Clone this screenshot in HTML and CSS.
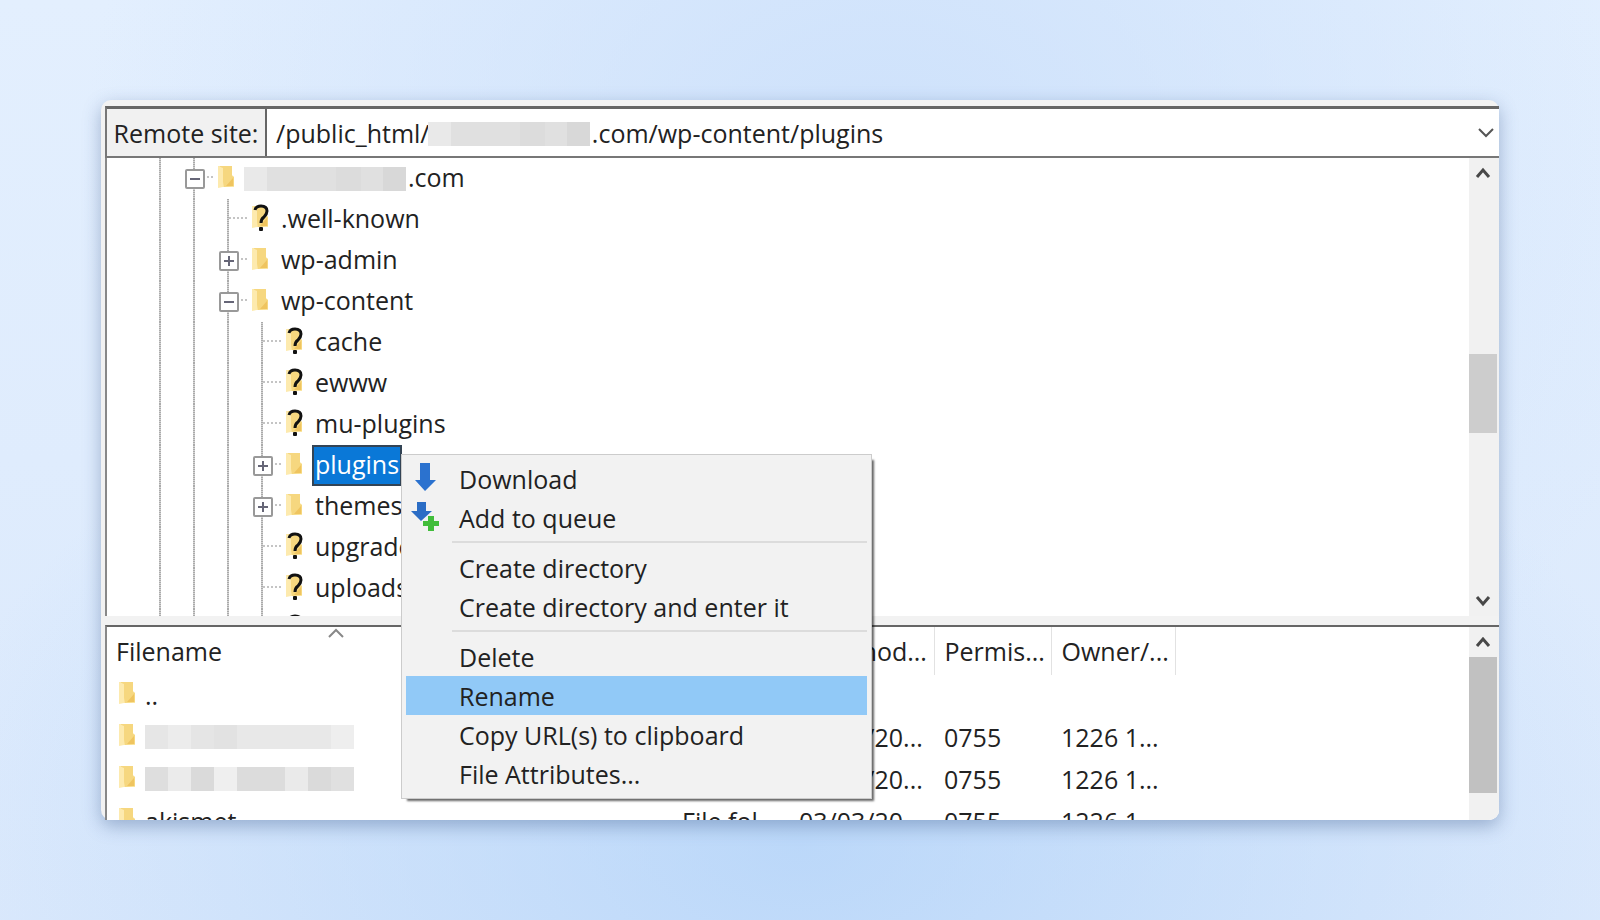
FILE: index.html
```html
<!DOCTYPE html>
<html lang="en">
<head>
  <meta charset="utf-8">
  <title>Remote site</title>
  <link rel="stylesheet" href="styles.css">
</head>
<body>
  <svg class="defs" aria-hidden="true">
    <symbol id="folder" viewBox="0 0 20 26">
      <path d="M2 2h14v9l2 2v10H2z" fill="#fbe7a4"/>
      <path d="M4 2h12v10l2 1v9l-10 1z" fill="#f6d77f"/>
      <path d="M2 2l5 2v19l-5 1z" fill="#fdeaae"/>
      <path d="M10 22l7-8v8z" fill="#efc45f"/>
    </symbol>
    <symbol id="unknown" viewBox="0 0 20 28">
      <use href="#folder" width="20" height="26"/>
      <path d="M5 6q1-4 6-4 6 0 6 5 0 3-3 6-3 2-3 6" fill="none" stroke="#111" stroke-width="3"/>
      <rect x="9" y="23" width="4" height="4" rx="1" fill="#111"/>
    </symbol>
    <symbol id="up" viewBox="0 0 16 12">
      <path d="M2 10l6-7 6 7" fill="none" stroke="#484848" stroke-width="3"/>
    </symbol>
    <symbol id="down" viewBox="0 0 16 12">
      <path d="M2 2l6 7 6-7" fill="none" stroke="#484848" stroke-width="3"/>
    </symbol>
  </svg>

  <main class="window">
    <div class="path-bar">
      <label for="remotePath">Remote site:</label>
      <div class="path">
        <select id="remotePath">
          <option>/public_html/&nbsp;&nbsp;&nbsp;&nbsp;&nbsp;&nbsp;&nbsp;&nbsp;&nbsp;&nbsp;&nbsp;&nbsp;&nbsp;&nbsp;&nbsp;&nbsp;&nbsp;&nbsp;&nbsp;&nbsp;&nbsp;&nbsp;&nbsp;&nbsp;&nbsp;.com/wp-content/plugins</option>
        </select>
        <span class="mask path-mask"></span>
        <svg class="path-arrow" viewBox="0 0 16 10"><path d="M1 1l7 7 7-7" fill="none" stroke="#555" stroke-width="2"/></svg>
      </div>
    </div>

    <section class="pane tree-pane">
      <ul class="tree">
        <li><i></i><i class="minus"></i><svg><use href="#folder"/></svg><span><b class="mask"></b>.com</span></li>
        <li><i></i><i></i><i class="leaf"></i><svg><use href="#unknown"/></svg><span>.well-known</span></li>
        <li><i></i><i></i><i class="plus"></i><svg><use href="#folder"/></svg><span>wp-admin</span></li>
        <li><i></i><i></i><i class="minus"></i><svg><use href="#folder"/></svg><span>wp-content</span></li>
        <li><i></i><i></i><i></i><i class="leaf"></i><svg><use href="#unknown"/></svg><span>cache</span></li>
        <li><i></i><i></i><i></i><i class="leaf"></i><svg><use href="#unknown"/></svg><span>ewww</span></li>
        <li><i></i><i></i><i></i><i class="leaf"></i><svg><use href="#unknown"/></svg><span>mu-plugins</span></li>
        <li><i></i><i></i><i></i><i class="plus"></i><svg><use href="#folder"/></svg><span class="selected">plugins</span></li>
        <li><i></i><i></i><i></i><i class="plus"></i><svg><use href="#folder"/></svg><span>themes</span></li>
        <li><i></i><i></i><i></i><i class="leaf"></i><svg><use href="#unknown"/></svg><span>upgrade</span></li>
        <li><i></i><i></i><i></i><i class="leaf"></i><svg><use href="#unknown"/></svg><span>uploads</span></li>
        <li><i></i><i></i><i></i><i class="leaf"></i><svg><use href="#unknown"/></svg></li>
      </ul>
      <div class="scrollbar">
        <button aria-label="Scroll up"><svg><use href="#up"/></svg></button>
        <div class="track"><div class="thumb tree-thumb"></div></div>
        <button aria-label="Scroll down"><svg><use href="#down"/></svg></button>
      </div>
    </section>

    <section class="pane list-pane">
      <div class="list">
        <table>
          <colgroup>
            <col class="col-name"><col class="col-size"><col class="col-type"><col class="col-date"><col class="col-perm"><col class="col-owner"><col>
          </colgroup>
          <thead>
            <tr>
              <th>Filename<svg class="sort" viewBox="0 0 16 10"><path d="M1 9l7-7 7 7" fill="none" stroke="#888" stroke-width="2"/></svg></th>
              <th>Filesize</th>
              <th>Filetype</th>
              <th>Last mod...</th>
              <th>Permis...</th>
              <th>Owner/...</th>
              <th></th>
            </tr>
          </thead>
          <tbody>
            <tr><td><div class="file"><svg><use href="#folder"/></svg>..</div></td><td></td><td></td><td></td><td></td><td></td><td></td></tr>
            <tr><td><div class="file"><svg><use href="#folder"/></svg><b class="mask file-mask"></b></div></td><td></td><td></td><td>03/03/20...</td><td>0755</td><td>1226 1...</td><td></td></tr>
            <tr><td><div class="file"><svg><use href="#folder"/></svg><b class="mask file-mask dark"></b></div></td><td></td><td></td><td>03/03/20...</td><td>0755</td><td>1226 1...</td><td></td></tr>
            <tr><td><div class="file"><svg><use href="#folder"/></svg>akismet</div></td><td></td><td>File fol...</td><td>03/03/20...</td><td>0755</td><td>1226 1...</td><td></td></tr>
          </tbody>
        </table>
      </div>
      <div class="scrollbar">
        <button aria-label="Scroll up"><svg><use href="#up"/></svg></button>
        <div class="track"><div class="thumb list-thumb"></div></div>
      </div>
    </section>

    <div class="menu">
      <button>
        <svg viewBox="0 0 28 32"><path d="M9 2h10v17h6L14 30 4 19h5z" fill="#2b72cf"/></svg>
        Download
      </button>
      <button>
        <svg viewBox="0 0 28 32">
          <path d="M6 2h9v9h6L10 21 0 11h6z" fill="#2b6dc5"/>
          <path d="M17 16h6v5h5v5h-5v5h-6v-5h-5v-5h5z" fill="#41bd3b"/>
        </svg>
        Add to queue
      </button>
      <hr>
      <button>Create directory</button>
      <button>Create directory and enter it</button>
      <hr>
      <button>Delete</button>
      <button class="active">Rename</button>
      <button>Copy URL(s) to clipboard</button>
      <button>File Attributes...</button>
    </div>
  </main>
</body>
</html>
```
FILE: styles.css
```css
* {
  box-sizing: border-box;
}
body {
  margin: 0;
  height: 100vh;
  padding: 100px 101px;
  background:
    radial-gradient(ellipse 55% 60% at 50% 92%, rgba(184, 214, 249, 0.9), rgba(184, 214, 249, 0)),
    radial-gradient(ellipse 50% 80% at 55% 20%, #cde1fb, rgba(205, 225, 251, 0)),
    linear-gradient(#e3effe, #dbe9fc);
  font-family: "Open Sans", "Noto Sans", sans-serif;
  font-size: 25px;
  color: #222;
}
button, select {
  font: inherit;
  color: inherit;
  border: none;
  background: none;
  padding: 0;
}
.defs {
  position: absolute;
  width: 0;
  height: 0;
}
.window {
  position: relative;
  display: flex;
  flex-direction: column;
  height: 100%;
  padding: 6px 0 0 4px;
  border-radius: 10px;
  background: #f2f2f2;
  box-shadow: 0 6px 18px rgba(60, 90, 140, 0.4);
}

/* path bar */
.path-bar {
  display: flex;
  height: 52px;
  border: 2px solid #777;
  border-top: 3px solid #666;
  border-right: none;
}
.path-bar label {
  display: flex;
  align-items: center;
  justify-content: center;
  width: 160px;
  background: #f1f1f1;
  border-right: 2px solid #666;
}
.path {
  position: relative;
  flex: 1;
  background: white;
}
.path select {
  width: 100%;
  height: 100%;
  padding-left: 9px;
  appearance: none;
}
.path-arrow {
  position: absolute;
  right: 5px;
  top: 19px;
  width: 16px;
  height: 10px;
}

/* blurred out names */
.mask {
  display: inline-block;
  width: 162px;
  height: 24px;
  background: linear-gradient(90deg, #e9e9e9 14%, #e0e0e0 14%, #e0e0e0 57%, #dcdcdc 57%, #dcdcdc 72%, #e0e0e0 72%, #e0e0e0 86%, #d8d8d8 86%);
}
.path-mask {
  position: absolute;
  left: 161px;
  top: 13px;
}

/* panes */
.pane {
  display: flex;
  overflow: hidden;
  border-left: 2px solid #888;
  background: white;
}
.tree-pane {
  flex: 0 0 458px;
}
.list-pane {
  flex: 1;
  margin-top: 9px;
  border-top: 2px solid #666;
  border-radius: 0 0 10px 0;
}

/* directory tree */
.tree {
  flex: 1;
  margin: 0;
  padding: 0 0 0 36px;
  list-style: none;
}
.tree li {
  display: flex;
  align-items: center;
  height: 41px;
}
.tree svg {
  width: 20px;
  height: 28px;
  margin: 0 8px 4px 5px;
}
.tree span {
  height: 41px;
  line-height: 39px;
  padding: 0 3px;
}
.tree .mask {
  margin: -3px 2px 0 -3px;
  vertical-align: middle;
}
.tree .selected {
  color: white;
  background: #0a78d7;
  outline: 2px solid #345;
  outline-offset: -2px;
}
.tree i {
  position: relative;
  width: 34px;
  height: 41px;
  background: repeating-linear-gradient(#aaa 0 1px, #d4d4d4 1px 2px) 16px 0 / 2px 100% no-repeat;
}
.leaf::after, .plus::after, .minus::after {
  content: "";
  position: absolute;
  left: 18px;
  top: 18px;
  width: 18px;
  border-top: 2px dotted #c4c4c4;
}
.plus::before, .minus::before {
  content: "";
  position: absolute;
  z-index: 1;
  left: 8px;
  top: 11px;
  width: 16px;
  height: 16px;
  border: 2px solid #999;
  border-radius: 2px;
  background: linear-gradient(#667, #667) center / 10px 2px no-repeat, white;
}
.plus::before {
  background: linear-gradient(#667, #667) center / 10px 2px no-repeat, linear-gradient(#667, #667) center / 2px 10px no-repeat, white;
}

/* scrollbars */
.scrollbar {
  display: flex;
  flex-direction: column;
  width: 30px;
  padding-right: 2px;
  background: #f1f1f1;
}
.scrollbar button {
  height: 30px;
}
.scrollbar svg {
  display: block;
  width: 16px;
  height: 12px;
  margin: 0 auto;
}
.track {
  flex: 1;
}
.thumb {
  background: #cdcdcd;
}
.tree-thumb {
  height: 79px;
  margin-top: 166px;
}
.list-thumb {
  height: 136px;
  background: #c1c1c1;
}

/* file list */
.list {
  flex: 1;
  overflow: hidden;
}
table {
  width: 100%;
  table-layout: fixed;
  border-collapse: collapse;
}
.col-name { width: 458px; }
.col-size { width: 107px; }
.col-type { width: 117px; }
.col-date { width: 145px; }
.col-perm { width: 117px; }
.col-owner { width: 124px; }
th, td {
  height: 42px;
  padding: 0 0 2px 10px;
  text-align: left;
  font-weight: normal;
  white-space: nowrap;
}
th {
  position: relative;
  height: 48px;
  padding-bottom: 0;
  border-right: 1px solid #e2e2e2;
}
th:first-child {
  padding-left: 9px;
}
th:last-child {
  border: none;
}
.sort {
  position: absolute;
  left: 221px;
  top: 1px;
  width: 16px;
  height: 10px;
}
.file {
  display: flex;
  align-items: center;
}
.file svg {
  width: 20px;
  height: 26px;
  margin: 0 8px 4px 0;
}
.file-mask {
  width: 209px;
  background: linear-gradient(90deg, #e6e6e6 11%, #ececec 11%, #ececec 22%, #e5e5e5 22%, #e5e5e5 33%, #e2e2e2 33%, #e2e2e2 44%, #e8e8e8 44%, #e8e8e8 89%, #eee 89%);
}
.dark {
  background: linear-gradient(90deg, #dedede 11%, #ebebeb 11%, #ebebeb 22%, #dadada 22%, #dadada 33%, #efefef 33%, #efefef 44%, #dcdcdc 44%, #dcdcdc 67%, #eaeaea 67%, #eaeaea 78%, #dadada 78%, #dadada 89%, #e0e0e0 89%);
}

/* context menu */
.menu {
  position: absolute;
  left: 300px;
  top: 354px;
  width: 471px;
  padding: 4px 4px 5px;
  border: 1px solid #ccc;
  background: #f2f2f2;
  box-shadow: 4px 4px 2px -2px rgba(0, 0, 0, 0.6);
}
.menu button {
  position: relative;
  display: block;
  width: 100%;
  height: 39px;
  padding-left: 53px;
  text-align: left;
}
.menu svg {
  position: absolute;
  left: 5px;
  top: 2px;
  width: 28px;
  height: 32px;
}
.menu .active {
  background: #91c9f7;
}
.menu hr {
  height: 2px;
  margin: 4px 0 5px 46px;
  border: none;
  background: #dcdcdc;
}
```
